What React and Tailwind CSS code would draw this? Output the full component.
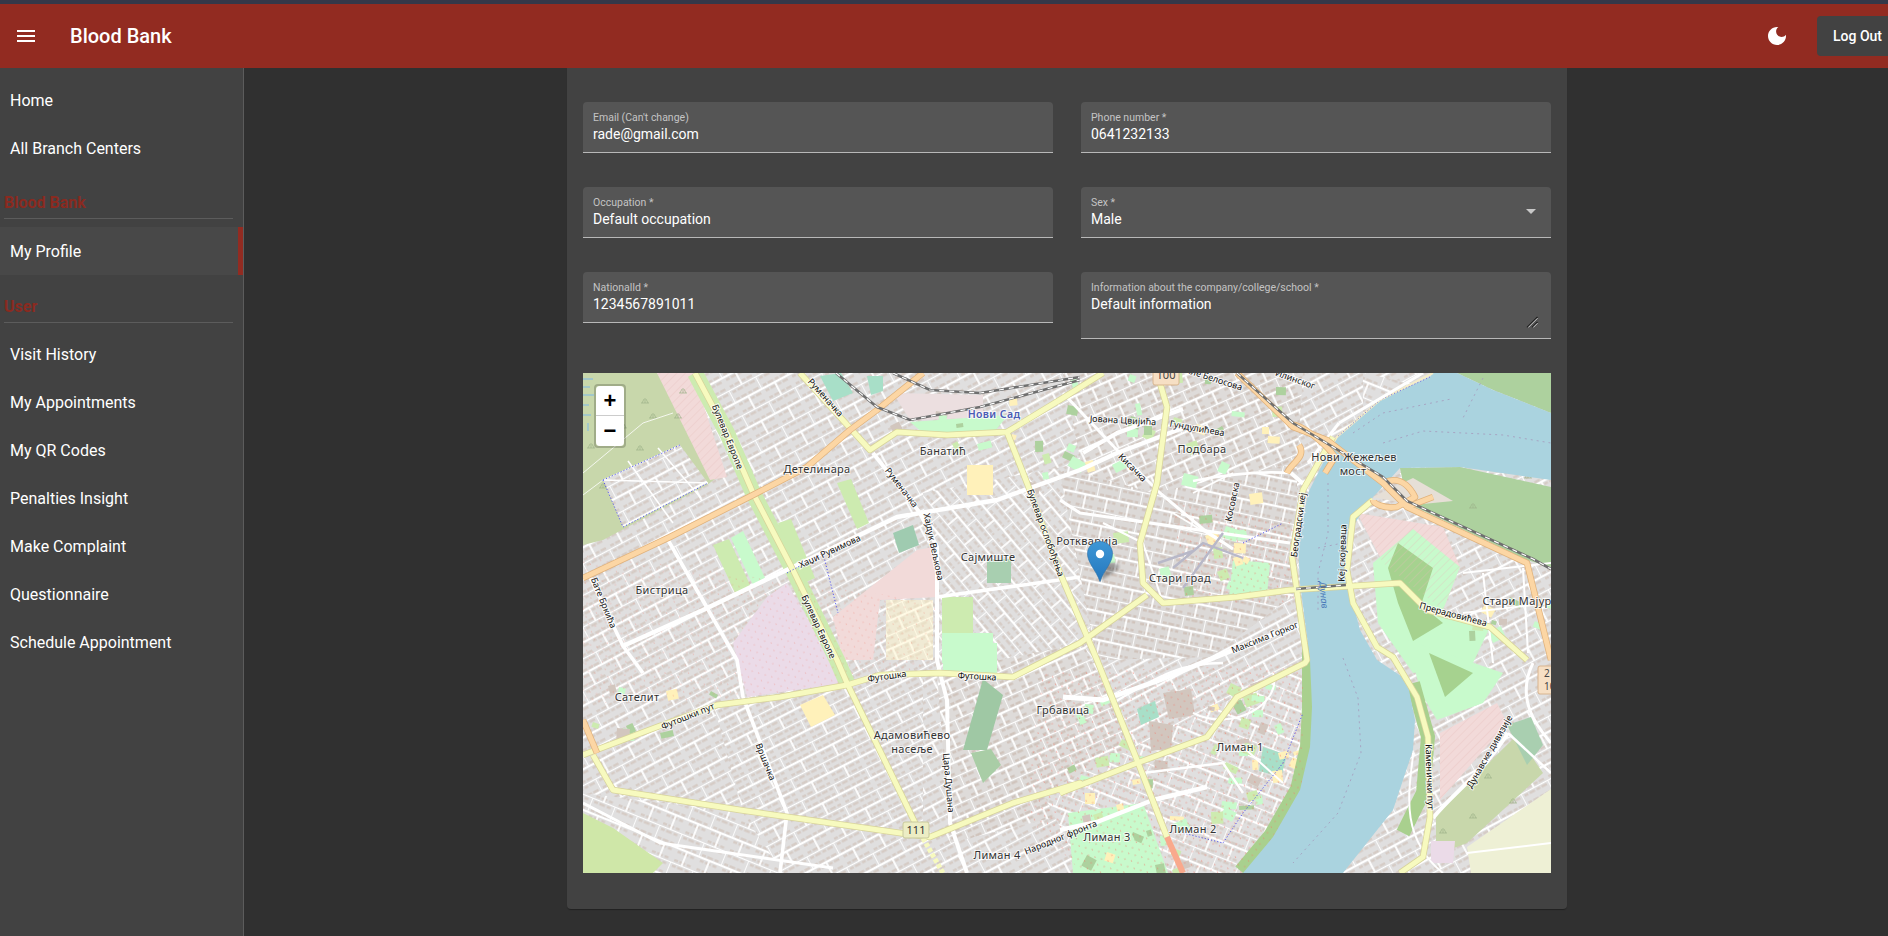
import { useState } from "react";

const MAP_W = 968;
const MAP_H = 500;

// tiled city blocks: rotated grid of white streets with tan buildings along each block
const Blocks = ({ id, w, h, angle, bg = "#e0dfdf", tan = "#d5cac3" }) => (
  <pattern id={id} width={w} height={h * 2} patternUnits="userSpaceOnUse" patternTransform={`rotate(${angle})`}>
    <rect width={w} height={h * 2} fill={bg} />
    <path
      d={`M3 3.4H${w - 2}M3 ${h - 2.6}H${w - 2}M3 ${h + 3.4}H${w - 2}M3 ${2 * h - 2.6}H${w - 2}`}
      stroke={tan}
      strokeWidth="2.4"
      strokeDasharray="4 1.6 6 2"
      fill="none"
    />
    <path d={`M0 0H${w}M0 ${h}H${w}M0 0V${h}M${w / 2} ${h}V${2 * h}`} stroke="#ffffff" strokeWidth="1.8" fill="none" />
  </pattern>
);

// small parks and yards scattered over the denser parts of town
let seed = 17;
const rnd = () => {
  seed = (seed * 1103 + 12345) % 65536;
  return seed / 65536;
};
const patches = [
  [480, 320, 100, 110, 14],
  [480, 0, 220, 110, 26],
  [620, 310, 100, 130, 34],
  [490, 430, 110, 70, 22],
  [500, 120, 200, 100, 16],
  [880, 200, 85, 80, 10],
  [0, 290, 130, 70, 10],
  [300, 20, 170, 90, 12],
].flatMap(([x, y, w, h, n]) =>
  Array.from({ length: n }, () => ({
    x: Math.round(x + rnd() * w),
    y: Math.round(y + rnd() * h),
    w: Math.round(5 + rnd() * 10),
    h: Math.round(4 + rnd() * 8),
    r: Math.round(rnd() * 60 - 30),
    c: ["#c8facc", "#cdebb0", "#c8facc", "#fff1ba", "#add19e", "#d2c6be"][Math.floor(rnd() * 6)],
  })),
);

const landuse = [
  ["#c8d7ab", "0,0 74,0 130,85 140,100 124,112 20,167 0,172"],
  ["#f2dad9", "74,0 110,0 144,104 127,107"],
  ["#ebdbe8", "184,224 204,210 262,310 164,324 150,270"],
  ["#f2dad9", "250,244 334,177 350,174 354,224 297,227 290,287 260,287"],
  ["#cdebb0", "254,110 268,106 286,150 274,156"],
  ["#c8facc", "148,165 160,158 182,205 170,212"],
  ["#cdebb0", "130,172 146,166 168,214 152,220"],
  ["#cdebb0", "195,150 208,146 232,205 216,212"],
  ["#a8cfb0", "404,186 428,186 428,210 404,210"],
  ["#9fcbb0", "310,160 330,152 336,172 316,180"],
  ["#fff1ba", "384,92 410,92 410,122 384,122"],
  ["#fff6cf", "303,227 350,227 350,287 303,287"],
  ["#fff1ba", "217,332 240,322 252,342 228,354"],
  ["#cdebb0", "359,224 390,224 390,260 359,260"],
  ["#c8facc", "359,260 410,260 410,290 359,290"],
  ["#c8facc", "360,270 414,270 414,302 360,302"],
  ["#9fc8a4", "400,306 420,322 404,377 380,377"],
  ["#a9cda6", "388,380 408,376 418,392 400,410"],
  ["#c8facc", "650,187 687,190 684,222 646,224"],
  ["#cfe7a8", "0,440 30,455 80,490 70,500 0,500"],
  ["#c8facc", "485,440 560,430 585,500 490,500"],
  ["#ecdfe0", "310,20 400,22 400,45 327,47"],
  ["#c8facc", "327,49 425,42 412,58 340,60"],
  ["#a8dfc8", "237,3 258,0 270,20 250,28"],
  ["#a8dfc8", "284,3 300,3 300,18 288,22"],
  ["#a8dfc8", "680,374 704,382 698,404 676,398"],
  ["#a8dfc8", "554,336 572,328 576,344 558,352"],
  ["#d2c6be", "580,320 608,316 612,342 586,346"],
  ["#d2c6be", "566,348 590,352 588,376 568,378"],
  // north of the river and the east bank
  ["#add19e", "874,0 968,0 968,40 910,17"],
  ["#add19e", "817,95 877,94 968,114 968,194 944,187 824,130"],
  ["#e6dfd6", "790,124 830,105 870,128 830,132"],
  ["#f2dad9", "774,140 860,154 877,194 860,237 800,190"],
  ["#c8facc", "830,156 877,194 860,237 907,254 890,290 830,300 795,250 790,190"],
  ["#a6d28f", "815,170 850,195 838,232 860,250 830,268 815,230 805,195"],
  ["#c8facc", "824,267 920,300 900,330 854,347 838,320"],
  ["#a6d28f", "846,280 890,300 862,324"],
  ["#f2dad9", "857,360 914,330 924,350 857,427"],
  ["#c8d7ab", "853,442 934,362 960,400 884,470 853,482"],
  ["#eef0d5", "884,474 968,416 968,500 888,500"],
  ["#a9cfb0", "924,352 948,344 960,372 944,392"],
  ["#ebdbe8", "848,468 872,468 870,490 848,490"],
];

// minor and secondary streets, drawn white without casing
const streets = [
  ["M40 273L120 237L210 194L314 144L414 127L497 97L534 80L600 55", 4.5],
  ["M480 20L534 77L577 120L620 156L650 176", 3],
  ["M477 127L497 140L707 170", 3.2],
  ["M7 204L40 273L60 300", 3.6],
  ["M85 167L154 287L160 324L204 440L197 500", 3.6],
  ["M290 80L337 140L354 174L354 287L357 300L364 327L367 450L384 500", 4],
  ["M354 224L497 204", 3.6],
  ["M0 430L77 470L250 495", 3],
  ["M480 324L520 327L577 307L650 277L720 250", 5],
  ["M477 457L514 449L570 427L624 414", 4.5],
  ["M500 80L534 60L600 36", 4],
  ["M610 108C650 100 680 98 708 100", 2.6],
  ["M708 100L725 115", 4],
  ["M840 0L756 50", 3],
  ["M756 50L725 90", 3],
  ["M850 445C870 420 900 400 925 360", 4],
  ["M860 500C810 460 830 400 830 380", 2],
  ["M925 360L968 400", 2.5],
  ["M950 290C930 330 960 360 968 370", 3],
  ["M884 480L968 470", 2],
  ["M530 330C580 300 600 290 640 290", 2.4],
  ["M560 400L640 390L660 420", 2.4],
  ["M610 340C650 360 700 330 690 300", 2],
  ["M660 374L700 410", 2],
  ["M520 150L560 170L580 230", 2],
  ["M610 120L650 100M590 140L640 170", 1.8],
  ["M0 122L20 107L97 72M0 100L60 50L90 40", 0.8],
  ["M20 107L125 110M45 88L90 150M75 75L118 125", 1.6],
  ["M880 200L968 190M880 240L968 230M900 200L910 290M940 195L945 280", 2],
];

// yellow tertiary roads
const tertiary = [
  "M217 0L287 77L314 59L364 62L424 59L480 25L520 0",
  "M424 59L444 110L477 200L514 287L554 387L584 464",
  "M577 10L584 34L574 110L557 170L560 210L580 230L654 224L707 217L817 210L844 237L907 254L944 287",
  "M790 127L770 144L764 197L770 230L794 274L810 284L834 324L845 364L847 444L840 484L817 500",
  "M750 64L720 117L709 184L724 287L722 290L654 324L624 364L554 390L477 420",
  "M0 382L74 354L134 332L197 324L264 312L297 302L357 300L430 304L497 270L564 222",
  "M10 382L30 417L157 437L317 460L347 464L430 430L497 410L477 420",
  "M112 0L144 60L170 120L210 197L254 287L264 310L337 460",
];

// orange primary roads
const primary = [
  "M0 205L87 164L170 122L224 94L267 57L294 37L340 0",
  "M654 0L710 54L744 67L800 110L824 134L944 190L968 287",
  "M0 347L14 380",
  "M706 52C716 48 744 72 752 84L742 100M716 72C724 84 708 90 704 100",
  "M800 110C820 100 830 120 832 124L814 134C800 136 790 130 790 127M824 134L850 124",
];

const rails = [
  "M253 0L294 34L327 47L397 34L497 7",
  "M310 0L347 17L397 20L497 4",
  "M654 0L710 50L800 104L824 128L950 186L968 196",
  "M713 216L763 212",
];

const tufts = [[62, 25], [70, 40], [95, 40], [57, 72], [20, 110], [8, 70], [100, 15], [40, 50], [930, 70], [945, 100], [890, 130], [905, 400], [890, 440], [860, 455], [930, 425]];

const areaLabels = [
  ["Банатић", 360, 78],
  ["Детелинара", 234, 96],
  ["Сајмиште", 405, 184],
  ["Ротквариjа", 504, 168],
  ["Бистрица", 79, 217],
  ["Подбара", 619, 76],
  ["Нови Жежељев", 771, 84],
  ["мост", 770, 98],
  ["Стари град", 597, 205],
  ["Стари Мајур", 934, 228],
  ["Сателит", 54, 324],
  ["Адамовићево", 329, 362],
  ["насеље", 329, 376],
  ["Грбавица", 480, 337],
  ["Лиман 4", 414, 482],
  ["Лиман 1", 657, 374],
  ["Лиман 2", 610, 456],
  ["Лиман 3", 524, 464],
];

const roadLabels = [
  ["Булевар Европе", 144, 64, 68],
  ["Булевар Европе", 235, 254, 65],
  ["Руменачка", 242, 25, 48],
  ["Руменачка", 318, 115, 52],
  ["Хаџи Рувимова", 247, 179, -25],
  ["Хајдук Вељкова", 350, 174, 78],
  ["Булевар ослобођења", 462, 160, 70],
  ["Бате Бркића", 20, 230, 68],
  ["Футошки пут", 105, 344, -22],
  ["Футошка", 304, 304, -8],
  ["Футошка", 394, 304, 3],
  ["Вршачка", 182, 389, 68],
  ["Цара Душана", 365, 410, 85],
  ["Народног фронта", 478, 465, -22],
  ["Јована Цвијића", 540, 48, 3],
  ["Гундулићева", 614, 56, 10],
  ["Кисачка", 549, 95, 45],
  ["Косовска", 650, 129, -78],
  ["Београдски кеј", 716, 152, -82],
  ["Кеј скојеваца", 760, 180, -88],
  ["Прерадовићева", 870, 242, 15],
  ["Максима Горког", 682, 265, -22],
  ["Каменички пут", 846, 404, 88],
  ["Дунавске дивизије", 907, 379, -60],
  ["Миле Белосова", 627, 5, 18],
  ["Илинског", 712, 7, 20],
];

function CityMap() {
  return (
    <svg viewBox={`0 0 ${MAP_W} ${MAP_H}`} className="block w-full h-full" xmlns="http://www.w3.org/2000/svg">
      <defs>
        <Blocks id="gA" w={30} h={14} angle={-28} />
        <Blocks id="gB" w={36} h={12} angle={-27} />
        <Blocks id="gC" w={22} h={14} angle={12} bg="#dcd9d7" tan="#cfc2ba" />
        <Blocks id="gD" w={18} h={13} angle={-24} bg="#dedbd9" tan="#cfc2ba" />
        <Blocks id="gE" w={24} h={15} angle={22} />
        <Blocks id="gF" w={26} h={13} angle={50} />
        <pattern id="fence" width="11" height="8" patternUnits="userSpaceOnUse" patternTransform="rotate(-20)">
          <circle cx="2" cy="2" r="0.6" fill="#f07a6a" />
          <circle cx="7.5" cy="6" r="0.6" fill="#f07a6a" />
        </pattern>
        <pattern id="hatch" width="6" height="6" patternUnits="userSpaceOnUse" patternTransform="rotate(-45)">
          <path d="M0 0H6" stroke="#e4bcb8" strokeWidth="0.6" />
        </pattern>
        <linearGradient id="pin" x1="0" y1="0" x2="0" y2="1">
          <stop offset="0" stopColor="#3f97d6" />
          <stop offset="1" stopColor="#2477bd" />
        </linearGradient>
        <filter id="soft">
          <feGaussianBlur stdDeviation="1.6" />
        </filter>
      </defs>

      <rect width={MAP_W} height={MAP_H} fill="url(#gA)" />
      <polygon points="0,420 160,440 200,500 0,500" fill="url(#gE)" />
      <polygon points="130,330 340,300 340,465 160,440" fill="url(#gB)" />
      <polygon points="340,120 500,90 514,290 354,300" fill="url(#gF)" />
      <polygon points="477,100 570,40 714,80 714,220 627,284 514,287" fill="url(#gC)" />
      <polygon points="480,0 720,0 714,90 570,120 500,100" fill="url(#gD)" />
      <polygon points="354,300 500,270 570,420 367,470" fill="url(#gD)" />
      <polygon points="460,420 720,290 720,500 500,500" fill="url(#gE)" />
      <polygon points="780,0 968,40 968,100 780,100" fill="url(#gE)" />

      {landuse.map(([fill, pts], i) => (
        <polygon key={i} points={pts} fill={fill} />
      ))}
      <polygon points="20,107 97,72 125,110 40,154" fill="url(#gA)" />
      <polygon points="74,0 110,0 144,104 127,107" fill="url(#hatch)" />
      <polygon points="857,360 914,330 924,350 857,427" fill="url(#hatch)" />
      <polygon points="774,140 860,154 877,194 860,237 800,190" fill="url(#hatch)" />
      <polygon points="303,227 350,227 350,287 303,287" fill="url(#gD)" opacity="0.45" />
      {patches.map((p, i) => (
        <rect key={i} x={p.x} y={p.y} width={p.w} height={p.h} fill={p.c} transform={`rotate(${p.r} ${p.x} ${p.y})`} />
      ))}
      <path d="M112 0L144 60L170 120L210 197L254 287L264 310" stroke="#cdebb0" strokeWidth="16" fill="none" />
      <path d="M729 270L729 334L727 374L717 417L690 464L660 500" stroke="#a9d08e" strokeWidth="20" fill="none" />
      <path d="M830 310L845 364L840 420L820 460" stroke="#a9d08e" strokeWidth="14" fill="none" />
      <polygon points="460,300 720,290 720,500 500,500 440,440" fill="url(#fence)" />
      <polygon points="590,130 714,150 714,230 600,230" fill="url(#fence)" />
      <polygon points="0,180 360,230 340,300 140,330 0,330" fill="url(#fence)" opacity="0.55" />
      {tufts.map(([x, y], i) => (
        <path key={i} d={`M${x} ${y + 5}V${y}M${x - 3} ${y + 5}L${x - 1} ${y + 1}M${x + 3} ${y + 5}L${x + 1} ${y + 1}M${x - 4} ${y + 5}H${x + 4}`} stroke="#9db38a" strokeWidth="0.7" fill="none" />
      ))}
      <path d="M0 6H10M0 14H7M0 22H11M0 32H6M0 42H8M5 50V58" stroke="#7db8e8" strokeWidth="1" fill="none" />

      {/* Danube */}
      <path
        d="M850 0L874 0L910 17L968 40L968 107L877 94L817 95L794 120L790 124L767 157L764 204L770 230L777 257L794 287L824 307L832 347L830 377L810 437L760 500L660 500L690 464L717 417L727 374L729 334L727 287L717 210L715 170L725 120L740 90L754 64L797 27L847 4Z"
        fill="#aad3df"
      />
      <path
        d="M770 60L800 40L868 26M900 5L880 45M800 70L840 58L920 62L968 70M735 175L760 170M745 110L745 160L735 200L735 240M760 285L775 325L778 380L755 440L710 490"
        stroke="#a69fc0"
        strokeWidth="0.9"
        strokeDasharray="2 4"
        fill="none"
      />
      <path d="M850 0L797 27L754 64L725 110" stroke="#f5edc8" strokeWidth="2" fill="none" />
      <path d="M847 4L797 27L754 64" stroke="#5a5ae0" strokeWidth="0.8" strokeDasharray="1.2 2" fill="none" />

      {streets.map(([d, w], i) => (
        <path key={i} d={d} stroke="#ffffff" strokeWidth={w} fill="none" strokeLinejoin="round" />
      ))}
      <path d="M590 195L620 170L660 185M600 215L640 160M575 190L610 178" stroke="#b8b8c8" strokeWidth="2.4" fill="none" />

      {tertiary.map((d, i) => (
        <path key={i} d={d} stroke="#d8d49a" strokeWidth="6.5" fill="none" strokeLinejoin="round" />
      ))}
      {tertiary.map((d, i) => (
        <path key={i} d={d} stroke="#f7fabf" strokeWidth="5" fill="none" strokeLinejoin="round" />
      ))}
      <path d="M584 464L600 500" stroke="#f9a98c" strokeWidth="6" fill="none" />
      <path d="M337 460L360 500" stroke="#f7fabf" strokeWidth="5" strokeDasharray="4 2" fill="none" />

      {primary.map((d, i) => (
        <path key={i} d={d} stroke="#e0b27c" strokeWidth="6.5" fill="none" strokeLinejoin="round" />
      ))}
      {primary.map((d, i) => (
        <path key={i} d={d} stroke="#fcd6a4" strokeWidth="5" fill="none" strokeLinejoin="round" />
      ))}

      {rails.map((d, i) => (
        <g key={i}>
          <path d={d} stroke="#6f6f6f" strokeWidth="2.6" fill="none" />
          <path d={d} stroke="#ffffff" strokeWidth="1.2" strokeDasharray="5 5" fill="none" />
        </g>
      ))}

      <path
        d="M20 107L97 72M20 107L40 154L125 110M204 200L240 180L255 240M660 170L700 150M600 460L640 470L660 440L700 390L720 340"
        stroke="#4a4af0"
        strokeWidth="0.9"
        strokeDasharray="1.2 2"
        fill="none"
      />

      {/* road shields */}
      <rect x="570" y="-8" width="26" height="20" rx="2" fill="#f6dfc4" stroke="#d8b48e" />
      <text x="583" y="6" textAnchor="middle" fontSize="11" fontFamily="Noto Sans, sans-serif" fill="#444">100</text>
      <rect x="320" y="449" width="26" height="16" rx="2" fill="#ecedc4" stroke="#c8c99c" />
      <text x="333" y="461" textAnchor="middle" fontSize="11" fontFamily="Noto Sans, sans-serif" fill="#333">111</text>
      <rect x="955" y="293" width="26" height="28" rx="2" fill="#f6dfc4" stroke="#d8b48e" />
      <text x="961" y="304" fontSize="10" fontFamily="Noto Sans, sans-serif" fill="#444">2</text>
      <text x="961" y="317" fontSize="10" fontFamily="Noto Sans, sans-serif" fill="#444">10</text>

      <g fontFamily="Noto Sans, sans-serif" style={{ paintOrder: "stroke" }} stroke="#ffffff" strokeWidth="2" strokeOpacity="0.75">
        <text x="411" y="45" textAnchor="middle" fontSize="10.5" fontWeight="600" fill="#4a5bb5" letterSpacing="0.4">Нови Сад</text>
        {areaLabels.map(([t, x, y]) => (
          <text key={t} x={x} y={y + 4} textAnchor="middle" fontSize="11" letterSpacing="0.3" fill="#333333">{t}</text>
        ))}
        {roadLabels.map(([t, x, y, r]) => (
          <text key={t + x} x={x} y={y} textAnchor="middle" dominantBaseline="middle" fontSize="9" fill="#111111" transform={`rotate(${r} ${x} ${y})`}>{t}</text>
        ))}
        <text x="740" y="222" textAnchor="middle" dominantBaseline="middle" fontSize="9.5" fontStyle="italic" fill="#4a78b8" stroke="none" transform="rotate(85 740 222)">Дунав</text>
      </g>

      {/* leaflet marker */}
      <path d="M517 208L533 198C538 194 536 190 530 190L522 190Z" fill="#000000" opacity="0.3" filter="url(#soft)" />
      <path
        d="M517 208.5C513 197 504.5 190 504.5 180.5C504.5 173.5 510 168.5 517 168.5C524 168.5 529.5 173.5 529.5 180.5C529.5 190 521 197 517 208.5Z"
        fill="url(#pin)"
        stroke="#2a6ea6"
        strokeWidth="0.6"
      />
      <circle cx="517" cy="181" r="4.2" fill="#ffffff" />
    </svg>
  );
}

const Field = ({ label, value, children }) => (
  <div className="relative h-[51px] rounded-t bg-[#555555] border-b border-[#b8b8b8] px-[10px] pt-[9px]">
    <label className="block h-[13px] text-[10.5px] leading-[14px] text-[#c4c4c4]">{label}</label>
    <input readOnly value={value} className="block w-full h-[20px] bg-transparent text-sm leading-5 text-white outline-none" />
    {children}
  </div>
);

const navItem = "flex items-center h-12 pl-[10px] pt-[2px] text-base text-white";

const NavSection = ({ title, top }) => (
  <div className={top}>
    <div className="pl-1 pt-px h-6 text-base leading-6 font-bold text-[#8a2a20]">{title}</div>
    <div className="mt-1 ml-1 w-[229px] h-px bg-[#5c5c5c]" />
  </div>
);

export default function App() {
  const [email] = useState("rade@gmail.com");
  return (
    <div className="h-[936px] w-[1888px] overflow-hidden flex flex-col bg-[#303030] font-[Roboto,sans-serif]">
      <div className="h-1 shrink-0 bg-[#343849]" />
      <header className="h-16 shrink-0 flex items-center bg-[#922b21] text-white overflow-hidden">
        <svg viewBox="0 0 24 24" className="ml-[14px] w-6 h-6 fill-white">
          <path d="M3 18h18v-2H3v2zm0-5h18v-2H3v2zm0-7v2h18V6H3z" />
        </svg>
        <h1 className="ml-[32px] text-xl font-medium">Blood Bank</h1>
        <svg viewBox="0 0 24 24" className="ml-auto w-6 h-6 fill-white">
          <path d="M12 3c-4.97 0-9 4.03-9 9s4.03 9 9 9 9-4.03 9-9c0-.46-.04-.92-.1-1.36-.98 1.37-2.58 2.26-4.4 2.26-2.98 0-5.4-2.42-5.4-5.4 0-1.81.89-3.42 2.26-4.4-.44-.06-.9-.1-1.36-.1z" />
        </svg>
        <button className="ml-[28px] -mr-[20px] w-[91px] h-10 shrink-0 rounded bg-[#424242] text-sm font-medium text-white text-left pl-4">
          Log Out
        </button>
      </header>

      <div className="flex-1 min-h-0 flex">
        <aside className="w-[244px] shrink-0 bg-[#424242] border-r border-[#5c5c5c] pt-2">
          <div className={navItem}>Home</div>
          <div className={navItem}>All Branch Centers</div>
          <NavSection title="Blood Bank" top="pt-[18px]" />
          <div className={`${navItem} mt-2 bg-[#484848] border-r-[5px] border-[#922b21]`}>My Profile</div>
          <NavSection title="User" top="pt-[19px]" />
          <div className="mt-[7px]">
            {["Visit History", "My Appointments", "My QR Codes", "Penalties Insight", "Make Complaint", "Questionnaire", "Schedule Appointment"].map((t) => (
              <div key={t} className={navItem}>{t}</div>
            ))}
          </div>
        </aside>

        <main className="flex-1 min-w-0 flex justify-center pl-[2px] items-start">
          <div className="w-[1000px] rounded-b bg-[#424242] px-4 pt-[34px] pb-[36px] shadow-[0_2px_1px_-1px_rgba(0,0,0,0.2),0_1px_1px_rgba(0,0,0,0.14)]">
            <div className="grid grid-cols-2 gap-x-[28px] gap-y-[34px] items-start">
              <Field label="Email (Can't change)" value={email} />
              <Field label="Phone number *" value="0641232133" />
              <Field label="Occupation *" value="Default occupation" />
              <Field label="Sex *" value="Male">
                <svg viewBox="0 0 24 24" className="absolute right-[8px] top-[12px] w-6 h-6 fill-[#c8c8c8]">
                  <path d="M7 10l5 5 5-5z" />
                </svg>
              </Field>
              <Field label="NationalId *" value="1234567891011" />
              <div className="relative rounded-t bg-[#555555] border-b border-[#b8b8b8] px-[10px] pt-[9px] h-[67px]">
                <label className="block h-[13px] text-[10.5px] leading-[14px] text-[#c4c4c4]">Information about the company/college/school *</label>
                <textarea
                  readOnly
                  defaultValue="Default information"
                  className="block w-full h-[34px] resize-none bg-transparent text-sm leading-5 text-white outline-none"
                />
                <svg viewBox="0 0 12 12" className="absolute right-[13px] bottom-[10px] w-3 h-3">
                  <path d="M1 11.5L11.5 1M6 11.5L11.5 6" stroke="#1a1a1a" strokeWidth="1.1" fill="none" />
                  <path d="M2.2 11.5L11.5 2.2M7.2 11.5L11.5 7.2" stroke="#e8e8e8" strokeWidth="0.9" fill="none" />
                </svg>
              </div>
            </div>
            <div className="relative mt-[34px] h-[500px] overflow-hidden">
              <CityMap />
              <div className="absolute left-[11px] top-[11px] w-[32px] rounded border-2 border-black/20 bg-clip-padding">
                <div className="flex items-center justify-center h-[30px] rounded-t-sm bg-white border-b border-[#cccccc] text-[22px] font-bold leading-none text-black font-['Liberation_Sans',sans-serif]">+</div>
                <div className="flex items-center justify-center h-[30px] rounded-b-sm bg-white text-[22px] font-bold leading-none text-black font-['Liberation_Sans',sans-serif]">−</div>
              </div>
            </div>
          </div>
        </main>
      </div>
    </div>
  );
}
